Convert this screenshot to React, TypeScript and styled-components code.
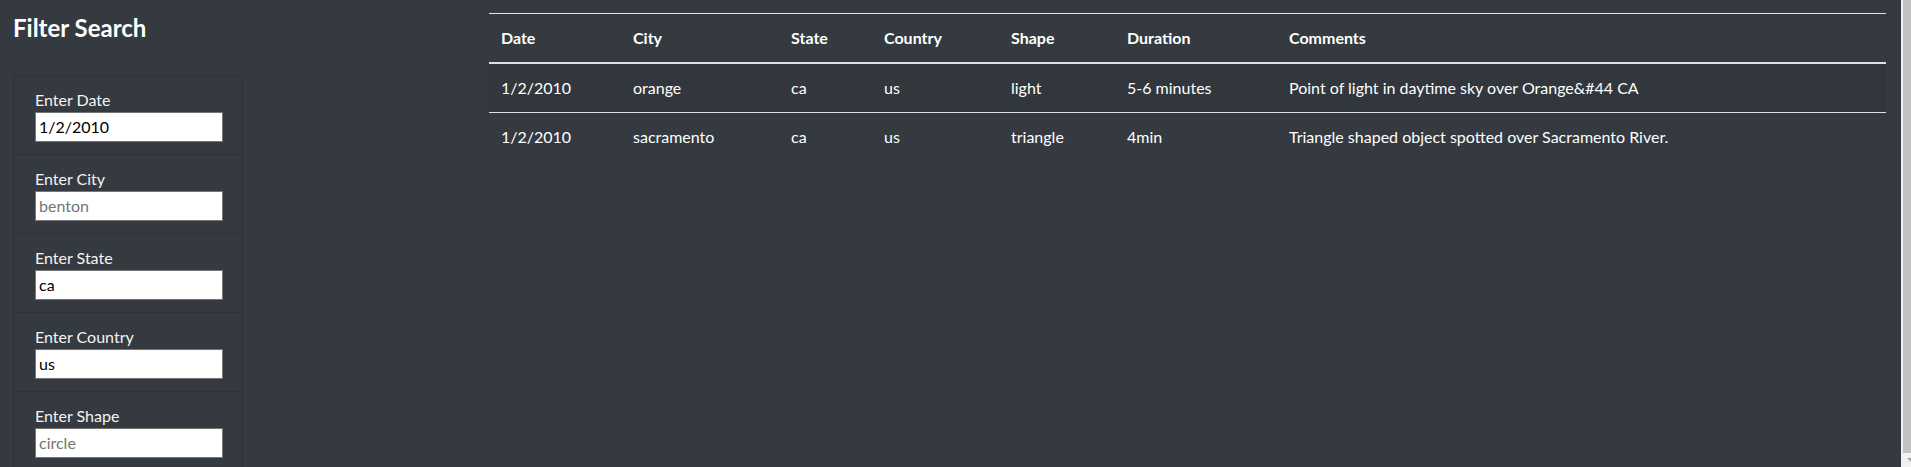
import React from 'react';
import styled, { createGlobalStyle } from 'styled-components';

const GlobalStyle = createGlobalStyle`
  html { background: #343a40; }
  body {
    margin: 0;
    background: #343a40;
    color: #fff;
    font-family: Lato, "Open Sans", sans-serif;
    font-size: 16px;
    line-height: 1.5;
    overflow: hidden;
  }
`;

const Page = styled.div`
  display: flex;
  align-items: flex-start;
  min-height: 490px;
  padding-right: 10px;
`;

const Sidebar = styled.aside`
  flex: 0 0 476px;
  box-sizing: border-box;
  padding-left: 13px;
`;

const Heading = styled.h2`
  margin: 14px 0 0;
  font-size: 24px;
  font-weight: 700;
  line-height: 1.2;
`;

const FilterList = styled.ul`
  list-style: none;
  margin: 32px 0 0;
  padding: 0;
  width: 230px;
  box-sizing: border-box;
  border: 1px solid rgba(0, 0, 0, 0.125);
  border-radius: 4px;
`;

const FilterItem = styled.li`
  padding: 12px 20px 12px 21px;
  & + & {
    border-top: 1px solid rgba(0, 0, 0, 0.125);
  }
`;

const Label = styled.label`
  display: block;
  line-height: 24px;
  font-size: 16px;
  color: #f4f4f4;
`;

const Input = styled.input`
  display: block;
  box-sizing: border-box;
  width: 188px;
  height: 30px;
  margin: 0;
  padding: 0 3px;
  border: 1px solid #767676;
  background: #fff;
  color: #000;
  font-family: inherit;
  font-size: 16px;
  &::placeholder { color: #757575; }
`;

const Main = styled.main`
  flex: 1;
  padding: 13px 15px 0 13px;
`;

const Table = styled.table`
  width: 1397px;
  border-collapse: collapse;
  table-layout: fixed;
  color: #fff;
`;

const Th = styled.th`
  text-align: left;
  vertical-align: bottom;
  font-weight: 700;
  padding: 12px;
  border-top: 1px solid #dee2e6;
  border-bottom: 2px solid #dee2e6;
`;

const Row = styled.tr<{ $striped?: boolean }>`
  background: ${p => (p.$striped ? 'rgba(0, 0, 0, 0.05)' : 'transparent')};
`;

const Td = styled.td`
  padding: 12px;
  vertical-align: top;
  border-top: 1px solid #dee2e6;
`;

/* browser scrollbar, drawn over the right edge of the viewport */
const ScrollTrack = styled.div`
  position: fixed;
  top: 0;
  right: 0;
  bottom: 0;
  width: 10px;
  display: flex;
  flex-direction: column;
  background: #f1f1f1;
  border-left: 2px solid #f1f1f1;
  box-sizing: border-box;
`;

const ScrollThumb = styled.div`
  flex: 1;
  background: #c1c1c1;
`;

const ScrollArrow = styled.div`
  flex: 0 0 14px;
  position: relative;
  background: #f1f1f1;
  &::after {
    content: '';
    position: absolute;
    left: 4px;
    top: 5px;
    border-left: 4px solid transparent;
    border-right: 4px solid transparent;
    border-top: 4px solid #a3a3a3;
  }
`;

const columns = [
  { name: 'Date', width: 132 },
  { name: 'City', width: 158 },
  { name: 'State', width: 93 },
  { name: 'Country', width: 127 },
  { name: 'Shape', width: 116 },
  { name: 'Duration', width: 162 },
  { name: 'Comments', width: 609 },
];

const rows = [
  ['1/2/2010', 'orange', 'ca', 'us', 'light', '5-6 minutes', 'Point of light in daytime sky over Orange&#44 CA'],
  ['1/2/2010', 'sacramento', 'ca', 'us', 'triangle', '4min', 'Triangle shaped object spotted over Sacramento River.'],
];

const filters = [
  { label: 'Enter Date', id: 'datetime', value: '1/2/2010', placeholder: '1/11/2011' },
  { label: 'Enter City', id: 'city', value: '', placeholder: 'benton' },
  { label: 'Enter State', id: 'state', value: 'ca', placeholder: 'ar' },
  { label: 'Enter Country', id: 'country', value: 'us', placeholder: 'us' },
  { label: 'Enter Shape', id: 'shape', value: '', placeholder: 'circle' },
];

export default function App() {
  return (
    <>
      <GlobalStyle />
      <Page>
        <Sidebar>
          <Heading>Filter Search</Heading>
          <FilterList>
            {filters.map(f => (
              <FilterItem key={f.id}>
                <Label htmlFor={f.id}>{f.label}</Label>
                <Input id={f.id} type="text" defaultValue={f.value} placeholder={f.placeholder} />
              </FilterItem>
            ))}
          </FilterList>
        </Sidebar>
        <Main>
          <Table>
            <colgroup>
              {columns.map(c => (
                <col key={c.name} style={{ width: c.width }} />
              ))}
            </colgroup>
            <thead>
              <tr>
                {columns.map(c => (
                  <Th key={c.name}>{c.name}</Th>
                ))}
              </tr>
            </thead>
            <tbody>
              {rows.map((r, i) => (
                <Row key={i} $striped={i % 2 === 0}>
                  {r.map((cell, j) => (
                    <Td key={j}>{cell}</Td>
                  ))}
                </Row>
              ))}
            </tbody>
          </Table>
        </Main>
      </Page>
      <ScrollTrack>
        <ScrollThumb />
        <ScrollArrow />
      </ScrollTrack>
    </>
  );
}
